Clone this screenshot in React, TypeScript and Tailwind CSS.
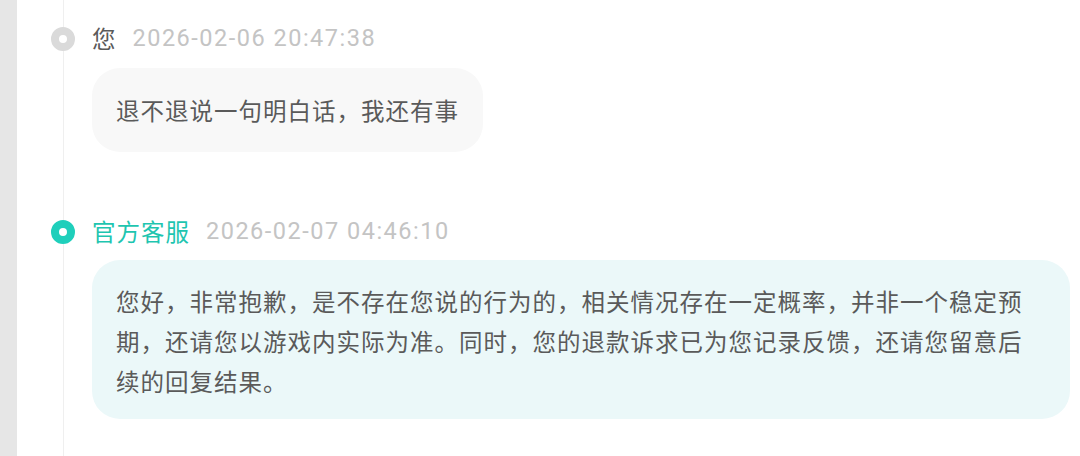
import React from 'react';

type Message = {
  author: string;
  time: string;
  text: string;
  official?: boolean;
};

const messages: Message[] = [
  {
    author: '您',
    time: '2026-02-06 20:47:38',
    text: '退不退说一句明白话，我还有事',
  },
  {
    author: '官方客服',
    time: '2026-02-07 04:46:10',
    text: '您好，非常抱歉，是不存在您说的行为的，相关情况存在一定概率，并非一个稳定预期，还请您以游戏内实际为准。同时，您的退款诉求已为您记录反馈，还请您留意后续的回复结果。',
    official: true,
  },
];

const cjk = { fontFamily: '"Noto Sans CJK SC", "Noto Sans", sans-serif' };
const stamp = { fontFamily: 'Roboto, "Noto Sans CJK SC", sans-serif' };

const App: React.FC = () => {
  return (
    <div className="h-[456px] w-[1080px] overflow-hidden bg-white flex" style={cjk}>
      {/* left page edge */}
      <div className="w-[17px] shrink-0 bg-[#e6e6e6]" />

      <div className="relative flex-1">
        {/* timeline rail */}
        <div className="absolute left-[46px] top-0 bottom-0 w-px bg-[#efefef]" />

        <div className="relative flex flex-col pt-[19px]">
          {messages.map((m, i) => (
            <div key={i} className={i > 0 ? 'mt-[60px]' : ''}>
              <div className="flex items-center h-[40px]">
                <div
                  className={
                    m.official
                      ? 'ml-[34px] w-6 h-6 rounded-full border-[8px] border-[#1fcfbb] bg-white'
                      : 'ml-[34px] w-6 h-6 rounded-full border-[8px] border-[#dadada] bg-white'
                  }
                />
                <span
                  className={
                    m.official
                      ? 'ml-[17px] text-[23.5px] tracking-[1px] text-[#1ec5b0]'
                      : 'ml-[17px] text-[23.5px] tracking-[1px] text-[#5a5a5a]'
                  }
                >
                  {m.author}
                </span>
                <span className="ml-[16px] text-[23.5px] tracking-[1.5px] text-[#c4c4c4]" style={stamp}>
                  {m.time}
                </span>
              </div>

              <div
                className={
                  m.official
                    ? 'ml-[75px] mt-[8px] w-[978px] rounded-[28px] bg-[#ebf8f9] pl-[24px] pr-[40px] pt-[21px] pb-[18px]'
                    : 'ml-[75px] mt-[9px] w-fit rounded-[28px] bg-[#f8f8f8] px-[24px] py-[22px]'
                }
              >
                <p className="text-[23.5px] leading-[40px] tracking-[1px] text-[#5a5a5a]">{m.text}</p>
              </div>
            </div>
          ))}
        </div>
      </div>
    </div>
  );
};

export default App;
